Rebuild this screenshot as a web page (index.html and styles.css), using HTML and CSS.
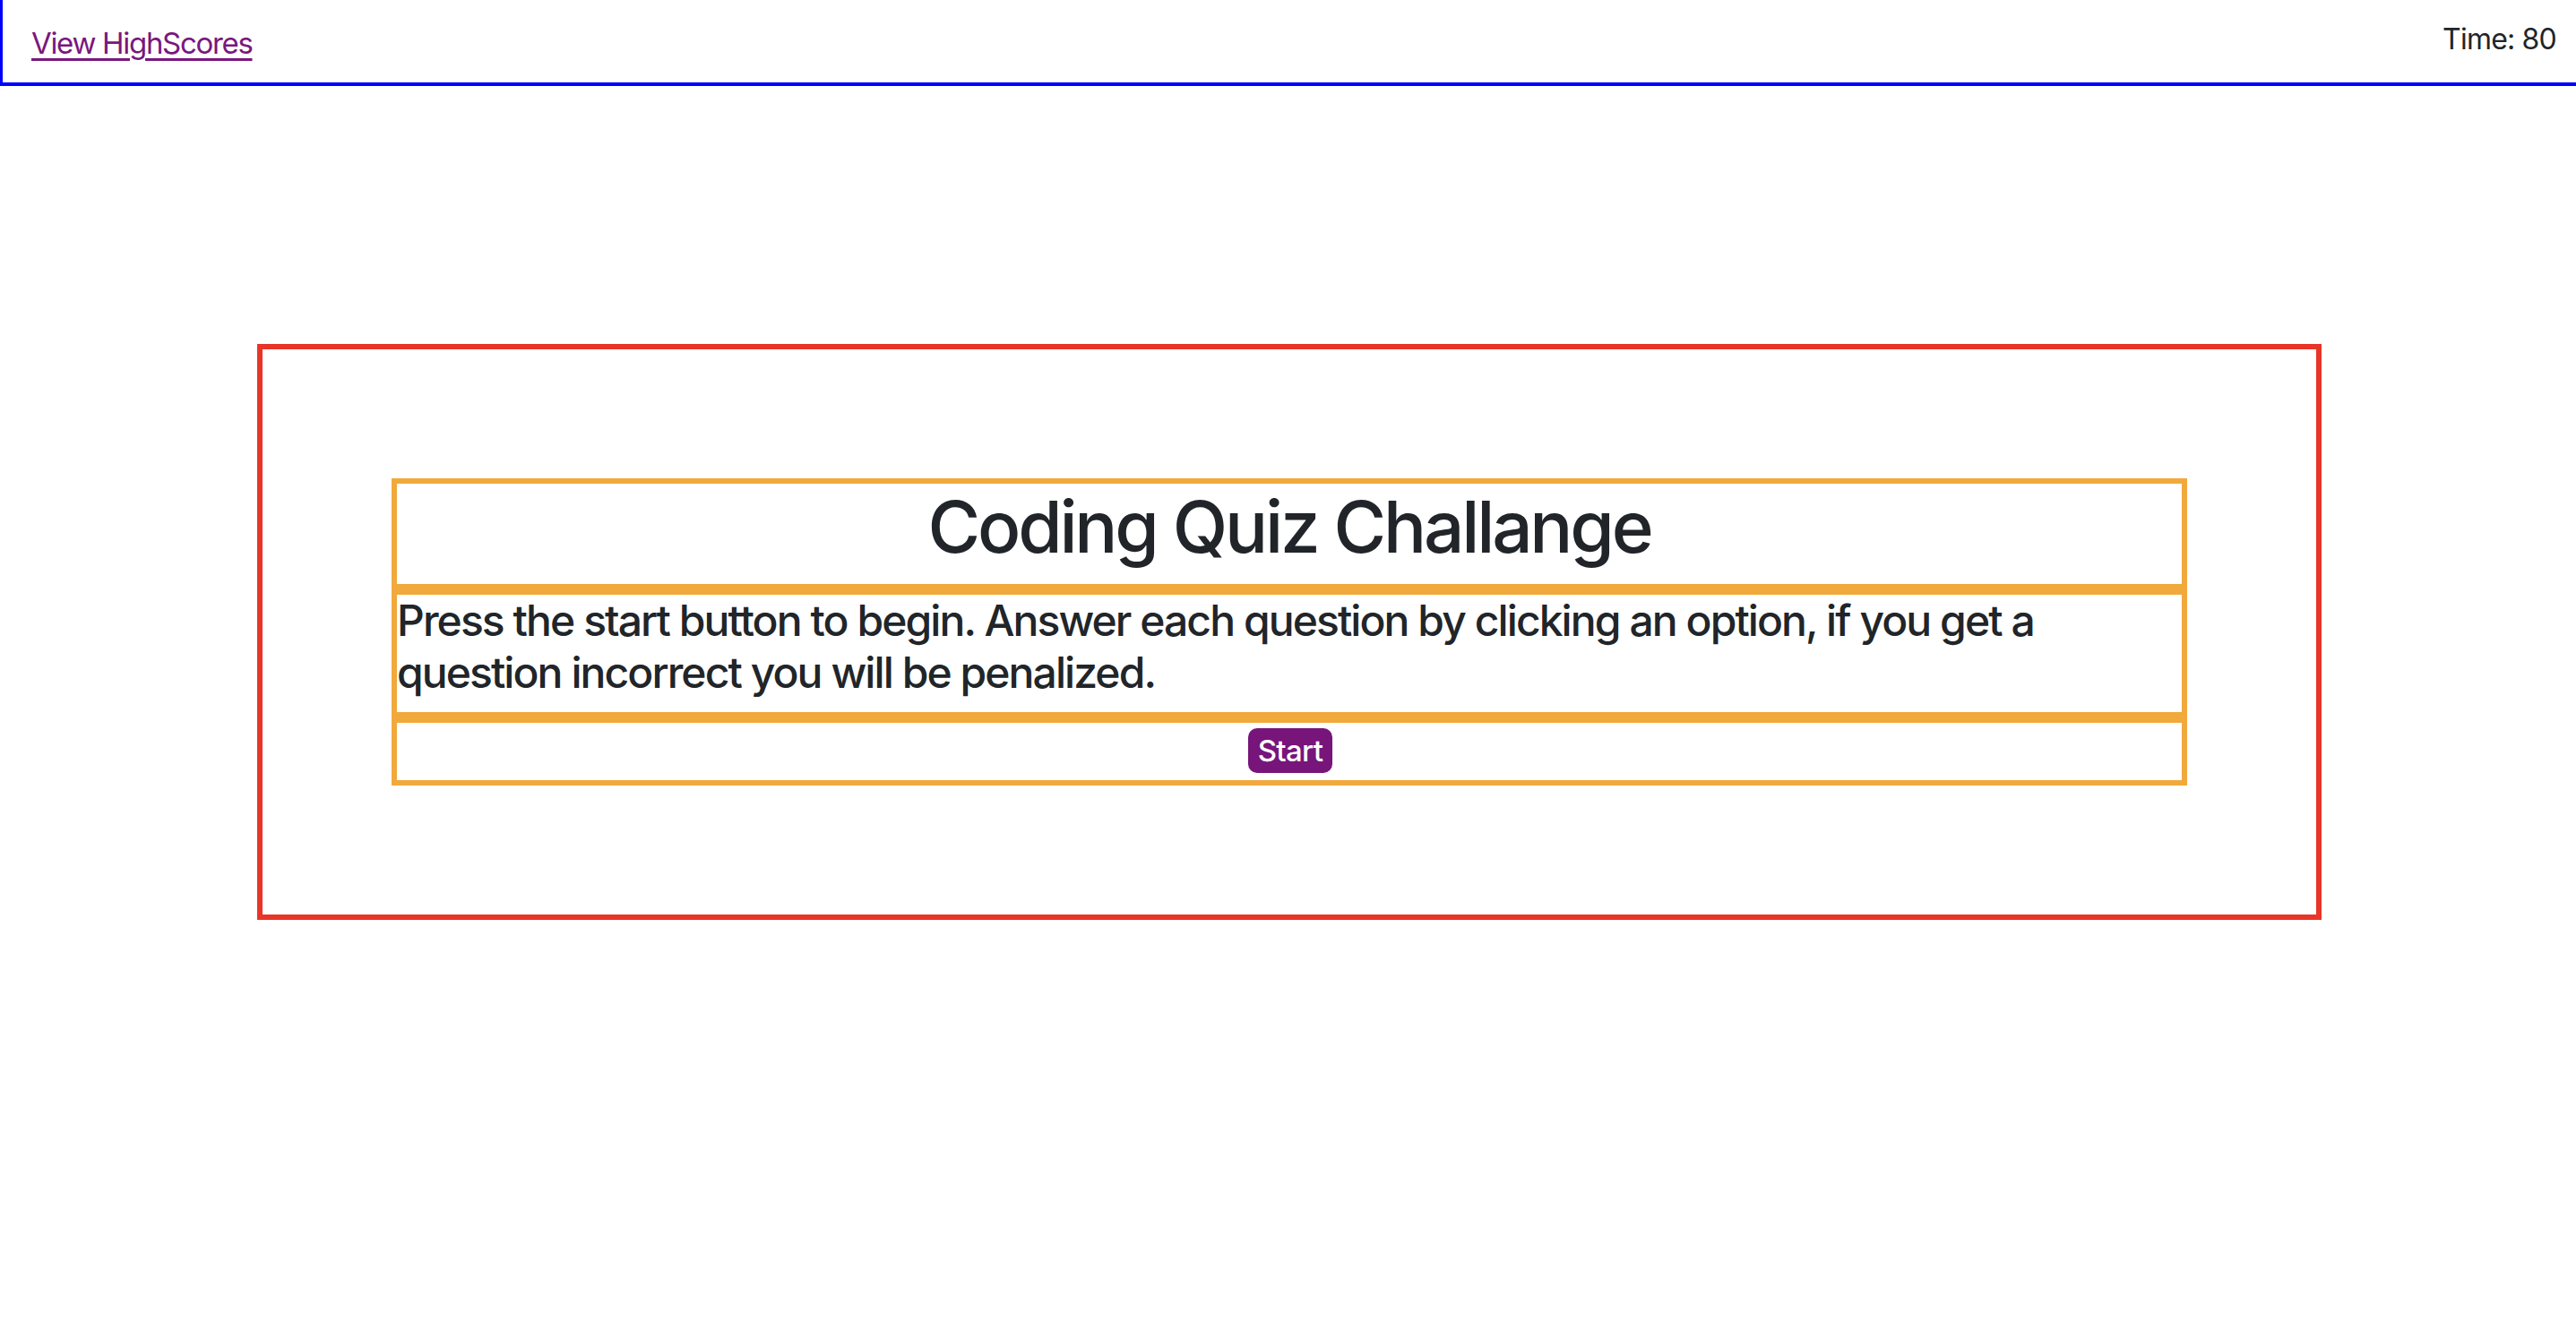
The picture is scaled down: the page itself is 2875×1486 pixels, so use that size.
FILE: index.html
```html
<!DOCTYPE html>
<html lang="en">
<head>
<meta charset="utf-8">
<title>Coding Quiz Challange</title>
<link rel="stylesheet" href="styles.css">
</head>
<body>
<header class="topbar">
  <a class="scores-link" href="#">View HighScores</a>
  <span class="timer">Time: 80</span>
</header>
<main class="quiz-frame">
  <div class="quiz-stack">
    <div class="panel panel-title">
      <h1 class="title">Coding Quiz Challange</h1>
    </div>
    <div class="panel panel-text">
      <h4 class="intro">Press the start button to begin. Answer each question by clicking an option, if you get a question incorrect you will be penalized.</h4>
    </div>
    <div class="panel panel-action">
      <button class="start-btn" type="button">Start</button>
    </div>
  </div>
</main>
</body>
</html>
```
FILE: styles.css
```css
* { box-sizing: border-box; }
html, body {
  margin: 0;
  padding: 0;
  background: #ffffff;
}
body {
  font-family: Inter, "Noto Sans", "Liberation Sans", sans-serif;
  color: #212529;
}
.topbar {
  height: 96px;
  border-left: 3px solid #0000ff;
  border-bottom: 4px solid #0000ff;
  display: flex;
  justify-content: space-between;
  align-items: flex-start;
  padding: 0 22px 0 32px;
}
.scores-link {
  font-size: 33px;
  line-height: 40px;
  margin-top: 28px;
  letter-spacing: -0.04em;
  color: #7a177d;
  text-decoration: underline;
  text-underline-offset: 5px;
  text-decoration-thickness: 3px;
}
.timer {
  font-size: 32px;
  line-height: 40px;
  margin-top: 24px;
  letter-spacing: -0.025em;
  color: #212529;
}
.quiz-frame {
  display: block;
  width: 2304px;
  margin: 288px 0 0 287px;
  border: 6px solid #e83527;
  padding: 144px;
}
.quiz-stack {
  display: flex;
  flex-direction: column;
}
.panel {
  border: 6px solid #f1a93c;
}
.title {
  margin: 0 0 16px 0;
  font-size: 80px;
  line-height: 96px;
  font-weight: 500;
  letter-spacing: -0.04em;
  text-align: center;
  color: #212529;
}
.intro {
  margin: 0 0 16px 0;
  font-size: 48px;
  line-height: 57.6px;
  font-weight: 500;
  letter-spacing: -0.04em;
  color: #212529;
}
.panel-action {
  height: 76px;
  display: flex;
  justify-content: center;
  align-items: flex-start;
  padding-top: 6px;
}
.start-btn {
  width: 94px;
  height: 50px;
  margin-left: 2px;
  border: none;
  border-radius: 10px;
  background: #77157a;
  color: #ffffff;
  font-family: Inter, "Noto Sans", "Liberation Sans", sans-serif;
  font-size: 33px;
  font-weight: 500;
  letter-spacing: -0.02em;
  line-height: 38px;
  padding: 0;
}
```
